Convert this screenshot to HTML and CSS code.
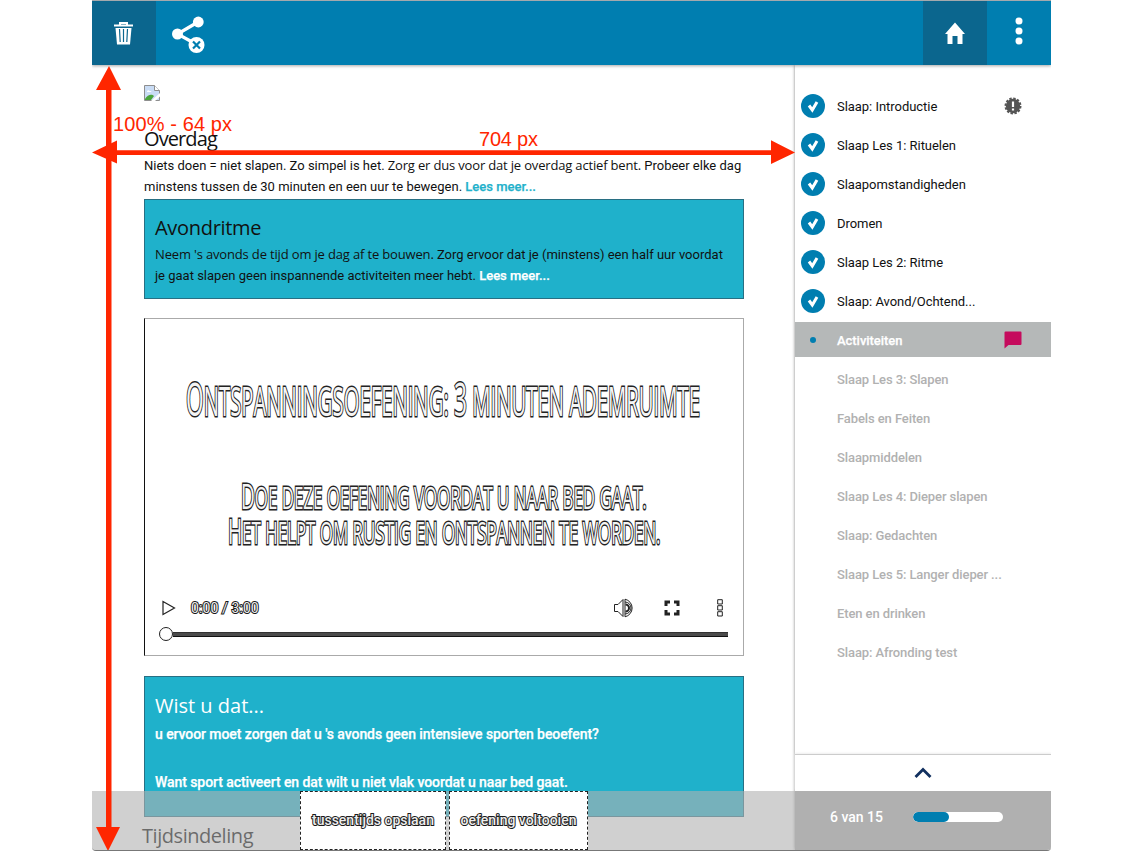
FILE: index.html
```
<!DOCTYPE html>
<html lang="nl">
<head>
<meta charset="utf-8">
<title>Slaap - Activiteiten</title>
<link rel="stylesheet" href="styles.css">
</head>
<body>
<div class="app">
  <header class="topbar">
    <button class="tool dark" aria-label="Verwijderen">
      <svg width="64" height="64" viewBox="0 0 64 64"><path d="M22 24.500h19M28 24v-2h7v2" fill="none" stroke="#fff" stroke-width="2"/><path d="M23.500 27h16l-1.500 16.500h-13z" fill="#fff"/><path d="M27.500 28l.7 13M31.500 28v13M35.500 28l-.7 13" stroke="#0b668e" stroke-width="1.200"/></svg>
    </button>
    <button class="tool" aria-label="Delen">
      <svg width="64" height="64" viewBox="0 0 64 64"><path d="M42 21L21.500 33L38 42" fill="none" stroke="#fff" stroke-width="3.200"/><circle cx="42.300" cy="21" r="5.400" fill="#fff"/><circle cx="21.500" cy="33" r="5.500" fill="#fff"/><circle cx="40.500" cy="44" r="8" fill="#fff"/><path d="M37 40.500l7 7M44 40.500l-7 7" stroke="#007eb0" stroke-width="2.200"/></svg>
    </button>
    <span class="spacer"></span>
    <button class="tool dark" aria-label="Start">
      <svg width="64" height="64" viewBox="0 0 64 64"><path d="M32 21.500L42 33h-2.500v10H34.500v-8h-5v8H24.500V33H22z" fill="#fff"/></svg>
    </button>
    <button class="tool" aria-label="Meer">
      <svg width="64" height="64" viewBox="0 0 64 64" fill="#fff"><circle cx="32" cy="20" r="3.500"/><circle cx="32" cy="30" r="3.500"/><circle cx="32" cy="40" r="3.500"/></svg>
    </button>
  </header>
  <div class="body">
    <main class="content">
      <svg class="broken" width="16" height="16" viewBox="0 0 16 16"><path d="M.5.5h10l5 5v10H.5z" fill="#c9dcf5" stroke="#8e8e8e"/><path d="M1 15v-1c3-5 7-5 9-3l-3 4z" fill="#4aa53c"/><path d="M3 7c0-2 2-2 2.500-1 2-.5 2 1 2 1z" fill="#fff"/><path d="M10.500.5v5h5" fill="#fff" stroke="#8e8e8e"/><path d="M16 8L7 16h4l5-4.500z" fill="#fff"/></svg>
      <h2 class="hand title">Overdag</h2>
      <p class="copy">Niets doen = niet slapen. Zo simpel is het. <span class="hand quote">Zorg er dus voor dat je overdag actief bent.</span> Probeer elke dag<br>minstens tussen de 30 minuten en een uur te bewegen. <b class="link">Lees meer...</b></p>
      <section class="card evening">
        <h2 class="hand title2">Avondritme</h2>
        <p class="copy"><span class="hand quote2">Neem 's avonds de tijd om je dag af te bouwen.</span> Zorg ervoor dat je (minstens) een half uur voordat<br>je gaat slapen geen inspannende activiteiten meer hebt. <b>Lees meer...</b></p>
      </section>
      <section class="video">
        <svg class="poster" width="598" height="270" viewBox="145 320 598 270">
          <text transform="translate(186 417) scale(.495 1)"><tspan font-size="46">O</tspan><tspan font-size="41">NTSPANNINGSOEFENING: </tspan><tspan font-size="46">3</tspan><tspan font-size="41"> MINUTEN ADEMRUIMTE</tspan></text>
          <text transform="translate(241 510) scale(.544 1)"><tspan font-size="35">D</tspan><tspan font-size="31">OE DEZE OEFENING VOORDAT U NAAR BED GAAT.</tspan></text>
          <text transform="translate(228 545) scale(.546 1)"><tspan font-size="35">H</tspan><tspan font-size="31">ET HELPT OM RUSTIG EN ONTSPANNEN TE WORDEN.</tspan></text>
        </svg>
        <div class="controls">
          <svg width="14" height="16" viewBox="0 0 14 16"><path d="M1 1.500v13L12.500 8z" fill="#fff" stroke="#222" stroke-width="1.200"/></svg>
          <span class="time outline">0:00 / 3:00</span>
          <svg class="vol" width="22" height="20" viewBox="0 0 22 20" fill="none" stroke="#222"><path d="M1.500 6.500h3.500L10 1.500v17L5 13.500H1.500z"/><path d="M12 1.200a9 9 0 0 1 0 17.600z"/><path d="M12 4a6 6 0 0 1 0 12"/><path d="M12.500 6.500a3.500 3.500 0 0 1 0 7" stroke-width="2"/></svg>
          <svg class="full" width="16" height="16" viewBox="0 0 16 16"><path d="M2 6V2h4M10 2h4v4M14 10v4h-4M6 14H2v-4" fill="none" stroke="#222" stroke-width="3"/></svg>
          <svg width="6" height="18" viewBox="0 0 6 18" fill="#fff" stroke="#222"><path d="M.7.700h4.600v4.300H.7zM.7 6.700h4.600v4.300H.7zM.7 12.700h4.600V17H.7z"/></svg>
        </div>
        <div class="seek"><span class="knob"></span><span class="track"></span></div>
      </section>
      <section class="card fact">
        <h2 class="hand title3">Wist u dat...</h2>
        <p class="copy"><b>u ervoor moet zorgen dat u 's avonds geen intensieve sporten beoefent?</b></p>
        <p class="copy second"><b>Want sport activeert en dat wilt u niet vlak voordat u naar bed gaat.</b></p>
      </section>
      <h2 class="hand title4">Tijdsindeling</h2>
    </main>
    <aside class="side">
      <ul class="lessons">
        <li><i class="check"><svg width="24" height="24" viewBox="0 0 24 24"><path d="M8 11.500l3.300 4.500L16 8"/></svg></i><span>Slaap: Introductie</span><svg class="flag" width="18" height="18" viewBox="0 0 18 18"><circle cx="9" cy="9" r="7.200" fill="#555"/><circle cx="9" cy="9" r="7.500" fill="none" stroke="#555" stroke-width="2" stroke-dasharray="2.400 1.527"/><path d="M9 4.500v5.500M9 11.500v2" stroke="#fff" stroke-width="2.200"/></svg></li>
        <li><i class="check"><svg width="24" height="24" viewBox="0 0 24 24"><path d="M8 11.500l3.300 4.500L16 8"/></svg></i><span>Slaap Les 1: Rituelen</span></li>
        <li><i class="check"><svg width="24" height="24" viewBox="0 0 24 24"><path d="M8 11.500l3.300 4.500L16 8"/></svg></i><span>Slaapomstandigheden</span></li>
        <li><i class="check"><svg width="24" height="24" viewBox="0 0 24 24"><path d="M8 11.500l3.300 4.500L16 8"/></svg></i><span>Dromen</span></li>
        <li><i class="check"><svg width="24" height="24" viewBox="0 0 24 24"><path d="M8 11.500l3.300 4.500L16 8"/></svg></i><span>Slaap Les 2: Ritme</span></li>
        <li><i class="check"><svg width="24" height="24" viewBox="0 0 24 24"><path d="M8 11.500l3.300 4.500L16 8"/></svg></i><span>Slaap: Avond/Ochtend...</span></li>
        <li class="current"><i class="dot"></i><span>Activiteiten</span><svg class="flag" width="18" height="18" viewBox="0 0 18 18"><path d="M1.500.5h15q1 0 1 1v11.500q0 1-1 1H4.500L.5 17.500v-16q0-1 1-1z" fill="#c50b5d"/></svg></li>
        <li class="todo"><span>Slaap Les 3: Slapen</span></li>
        <li class="todo"><span>Fabels en Feiten</span></li>
        <li class="todo"><span>Slaapmiddelen</span></li>
        <li class="todo"><span>Slaap Les 4: Dieper slapen</span></li>
        <li class="todo"><span>Slaap: Gedachten</span></li>
        <li class="todo"><span>Slaap Les 5: Langer dieper ...</span></li>
        <li class="todo"><span>Eten en drinken</span></li>
        <li class="todo"><span>Slaap: Afronding test</span></li>
      </ul>
      <div class="expand"><svg width="18" height="12" viewBox="0 0 18 12"><path d="M1.500 10L9 2.500l7.500 7.500" fill="none" stroke="#12305f" stroke-width="2.800"/></svg></div>
      <div class="progress"><span>6 van 15</span><div class="bar"><div class="fill" style="width:40%"></div></div></div>
    </aside>
  </div>
  <footer class="actions">
    <button class="outline save">tussentijds opslaan</button>
    <button class="outline done">oefening voltooien</button>
  </footer>
  <svg class="measure" width="959" height="851" viewBox="92 0 959 851" fill="#ff2600">
    <path d="M109 66l12 24h-9.500v737h8.500l-12 24-12-24h10V90h-10z"/>
    <path d="M92 152.500L117 140.500v9.800h654v-10L795 152.500l-24 11.500v-9H117v8.500z"/>
    <text x="113" y="131" textLength="119">100% - 64 px</text>
    <text x="479" y="146" textLength="59">704 px</text>
  </svg>
</div>
</body>
</html>
```

FILE: styles.css
```
* { box-sizing: border-box; }
body { margin: 0; background: #fff; font: 13px/21px Roboto, sans-serif; color: #111; }
h2, p, ul { margin: 0; padding: 0; font-weight: 400; }
button { border: 0; padding: 0; font: inherit; }
svg { display: block; flex: none; }
.app { position: relative; width: 959px; height: 851px; margin-left: 92px; overflow: hidden; border-top: 1px solid #a4a9ad; border-bottom: 1px solid #777; border-radius: 0 0 4px 4px; display: flex; flex-direction: column; }
.topbar { height: 64px; flex: none; display: flex; background: #007eb0; box-shadow: 0 1px 3px rgba(0,0,0,.35); z-index: 1; }
.tool { width: 64px; height: 64px; background: none; }
.tool.dark { background: #0b668e; }
.spacer { flex: 1; }
.body { flex: 1; min-height: 0; display: flex; }
.content { width: 703px; flex: none; padding: 20px 51px 0 52px; overflow: hidden; white-space: nowrap; }
.side { width: 256px; display: flex; flex-direction: column; box-shadow: 0 0 3px rgba(0,0,0,.5); }

.hand { font-family: "Open Sans", sans-serif; font-weight: 400; }
.title { font-size: 20px; line-height: 26px; margin-top: 25px; height: 29px; letter-spacing: -.9px; }
.copy { height: 42px; }
.copy b { font-weight: 500; -webkit-text-stroke: .25px currentColor; }
.quote { letter-spacing: -.17px; }
.quote2 { letter-spacing: -.16px; }
.copy .link { color: #1fb1cb; }
.card { background: #1fb1cb; border: 1px solid #286f83; padding: 0 10px; }
.evening { height: 100px; margin-top: 2px; padding-top: 15px; }
.title2 { font-size: 20px; line-height: 26px; height: 29px; letter-spacing: -.3px; }
.evening b, .fact { color: #fff; }
.video { height: 338px; margin-top: 19px; border: 1px solid #aaa; border-left-color: #111; }
.poster text { font-family: "Open Sans", sans-serif; fill: #f4f4f4; stroke: #222; stroke-width: 3px; paint-order: stroke; white-space: pre; }
.controls { display: flex; align-items: center; height: 37px; padding: 0 20px 0 17px; }
.outline { color: #eee; -webkit-text-stroke: 2px #1a1a1a; paint-order: stroke fill; }
.time { margin-left: 15px; padding-top: 2px; font-size: 14px; letter-spacing: .1px; }
.vol { margin-left: auto; }
.full { margin: 0 37px 0 29px; }
.seek { display: flex; align-items: center; height: 16px; padding: 0 15px 0 14px; }
.knob { width: 14px; height: 14px; border: 1px solid #222; border-radius: 50%; background: #fff; }
.track { flex: 1; height: 5px; background: #4b4b4b; border-bottom: 1px solid #111; border-top: 1px solid #333; }
.fact { height: 141px; margin-top: 20px; padding-top: 16px; }
.title3 { font-size: 20px; line-height: 26px; height: 31px; }
.fact .copy { height: 21px; font-size: 14px; letter-spacing: -.07px; }
.fact .second { margin-top: 27px; }
.title4 { font-size: 20px; line-height: 26px; margin: 6px 0 0 -2px; letter-spacing: -.45px; color: #000; }

.lessons { flex: 1; list-style: none; padding-top: 23px; display: flex; flex-direction: column; gap: 4px; }
.lessons li { height: 35px; flex: none; display: flex; align-items: center; padding: 0 29px 0 6px; color: #111; }
.lessons span { white-space: nowrap; letter-spacing: -.04px; padding-top: 2px; }
.check { width: 24px; height: 24px; border-radius: 50%; background: #007eb0; margin-right: 12px; flex: none; }
.check path { fill: none; stroke: #fff; stroke-width: 3px; }
.flag { margin-left: auto; }
.lessons .current { background: #b5b8b8; color: #fff; font-weight: 500; -webkit-text-stroke: .25px currentColor; }
.dot { width: 6px; height: 6px; border-radius: 50%; background: #007eb0; margin: 0 21px 0 9px; }
.lessons .todo { padding-left: 42px; color: #b1b1b1; font-weight: 500; }
.lessons .todo span { letter-spacing: -.1px; }
.expand { height: 37px; flex: none; display: flex; justify-content: center; align-items: center; border-top: 1px solid #ccc; box-shadow: 0 -1px 2px #eee; }
.progress { height: 59px; flex: none; background: #b0b0b0; display: flex; align-items: center; padding: 0 48px 7px 35px; color: #fff; font-weight: 500; font-size: 14px; justify-content: space-between; }
.bar { width: 90px; height: 10px; border-radius: 5px; background: #fff; overflow: hidden; }
.fill { height: 10px; border-radius: 5px; background: #007eb0; }

.actions { position: absolute; left: 0; bottom: 0; width: 703px; height: 59px; background: rgba(176,176,176,.6); display: flex; gap: 3px; padding-left: 208px; }
.actions button { background: #fff; border: 1px dashed #222; font-size: 14px; font-weight: 500; }
.save { width: 146px; }
.done { width: 139px; }
.measure { position: absolute; left: 0; top: -1px; z-index: 2; pointer-events: none; }
.measure text { font: 20px "Liberation Sans", sans-serif; }
```
